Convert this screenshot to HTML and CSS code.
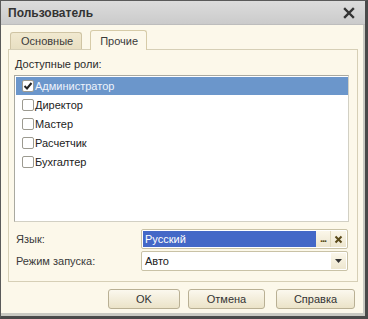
FILE: index.html
```html
<!DOCTYPE html>
<html lang="ru">
<head>
<meta charset="utf-8">
<link rel="stylesheet" href="styles.css">
</head>
<body>
<div class="window">
  <div class="titlebar">
    <span class="title">Пользователь</span>
    <svg class="close" width="12" height="12" viewBox="0 0 12 12"><path d="M2 2 L10 10 M10 2 L2 10" stroke="#333" stroke-width="2.4" stroke-linecap="square"/></svg>
  </div>
  <div class="body">
    <div class="tabs">
      <div class="tab">Основные</div>
      <div class="tab active">Прочие</div>
    </div>
    <div class="panel">
      <div class="label-roles">Доступные роли:</div>
      <div class="list">
        <div class="row selected"><span class="cb checked"><svg width="10" height="10" viewBox="0 0 10 10"><path d="M1.5 5 L4 7.5 L8.5 2" stroke="#222" stroke-width="2" fill="none"/></svg></span>Администратор</div>
        <div class="row"><span class="cb"></span>Директор</div>
        <div class="row"><span class="cb"></span>Мастер</div>
        <div class="row"><span class="cb"></span>Расчетчик</div>
        <div class="row"><span class="cb"></span>Бухгалтер</div>
      </div>
      <div class="field">
        <span class="flabel">Язык:</span>
        <div class="input">
          <span class="value sel">Русский</span>
          <span class="ibtn dots">...</span>
          <span class="ibtn clr"><svg width="9" height="9" viewBox="0 0 9 9"><path d="M1.5 1.5 L7.5 7.5 M7.5 1.5 L1.5 7.5" stroke="#5a4a1a" stroke-width="2"/></svg></span>
        </div>
      </div>
      <div class="field">
        <span class="flabel">Режим запуска:</span>
        <div class="input">
          <span class="value">Авто</span>
          <span class="ibtn drop"><svg width="7" height="4" viewBox="0 0 7 4"><path d="M0 0 H7 L3.5 4 Z" fill="#333"/></svg></span>
        </div>
      </div>
    </div>
    <div class="buttons">
      <div class="btn ok">OK</div>
      <div class="btn">Отмена</div>
      <div class="btn help">Справка</div>
    </div>
  </div>
</div>
</body>
</html>
```
FILE: styles.css
```css
* { box-sizing: border-box; }
html, body { margin: 0; padding: 0; }
body {
  width: 368px; height: 319px; overflow: hidden;
  font-family: "Liberation Sans", Arial, sans-serif;
  font-size: 11px; color: #2a2a2a;
  background: #3a3a3a;
}
.window {
  width: 368px; height: 319px;
  border: 1px solid #5a5a5a;
  border-right-width: 3px;
  border-bottom-width: 3px;
  border-right-color: #4a4a4a;
  border-bottom-color: #4a4a4a;
  background: #fcf8ea;
  display: flex; flex-direction: column;
  box-shadow: inset -2px -3px 0 #c9c9c2;
}
.titlebar {
  height: 24px; flex: none;
  background: linear-gradient(#dcdcdc, #cbcbcb);
  display: flex; align-items: center; justify-content: space-between;
  padding: 0 10px 0 7px;
  border-bottom: 1px solid #bdbdbd;
}
.title { font-weight: bold; font-size: 12px; color: #333; }
.close { margin-top: 1px; }
.body { flex: 1; padding: 4px 7px 0 7px; display: flex; flex-direction: column; }
.tabs { display: flex; align-items: flex-end; height: 20px; padding-left: 2px; gap: 8px; }
.tab {
  height: 17px; padding: 0 8px 0 10px; display: flex; align-items: center;
  background: linear-gradient(#f1e9d0, #e8dfc2);
  border: 1px solid #cfc4a4; border-bottom: none;
  border-radius: 3px 3px 0 0;
  color: #3a3a3a;
}
.tab.active {
  height: 20px; background: #fcf8ea; position: relative; top: 1px; padding: 0 8px 0 9px;
  border-color: #d6cba8;
}
.panel {
  height: 233px;
  border: 1px solid #d6cfb6;
  padding: 8px 7px 0 5px;
  display: flex; flex-direction: column;
}
.label-roles { margin-left: 1px; height: 17px; }
.list {
  height: 147px; margin-top: 0;
  background: #fff;
  border: 1px solid #a9a9a0;
  border-right-color: #d2d0c4; border-bottom-color: #d2d0c4;
  padding: 1px 0 0 1px;
  margin-right: 1px;
}
.row {
  height: 19px; display: flex; align-items: center; padding-left: 6px;
  color: #222;
}
.row.selected { background: #6b96cb; color: #eef3fb; height: 18px; }
.cb {
  width: 12px; height: 12px; margin-right: 1px;
  border: 1px solid #9c9a90; border-radius: 2px; background: #fff;
  display: flex; align-items: center; justify-content: center;
}
.field { display: flex; align-items: center; margin-top: 2px; height: 20px; }
.list + .field { margin-top: 7px; }
.flabel { width: 127px; padding-left: 2px; color: #3a3a3a; }
.input {
  width: 207px; height: 20px;
  border: 1px solid #c9c2a6; border-radius: 2px;
  background: #fff; display: flex; align-items: center;
  padding: 1px;
}
.value { flex: 1; height: 16px; display: flex; align-items: center; padding-left: 2px; color: #222; }
.value.sel { background: #4468c7; color: #fff; }
.ibtn {
  width: 15px; height: 16px; display: flex; align-items: center; justify-content: center;
  background: linear-gradient(#fbf7ea, #ede6cf);
}
.dots { color: #5a4a1a; font-weight: bold; letter-spacing: -1px; align-items: flex-end; padding-bottom: 3px; border-right: 1px solid #e0d8bd; }
.buttons { display: flex; justify-content: flex-end; gap: 8px; padding: 7px 3px 0 0; }
.btn {
  height: 20px; display: flex; align-items: center; justify-content: center;
  border: 1px solid #b9b094; border-radius: 3px;
  background: linear-gradient(#fbf8ee, #ebe3c8);
  color: #333; width: 77px;
}
.btn.ok { width: 72px; }
.btn.help { width: 79px; margin-left: 3px; }
```
